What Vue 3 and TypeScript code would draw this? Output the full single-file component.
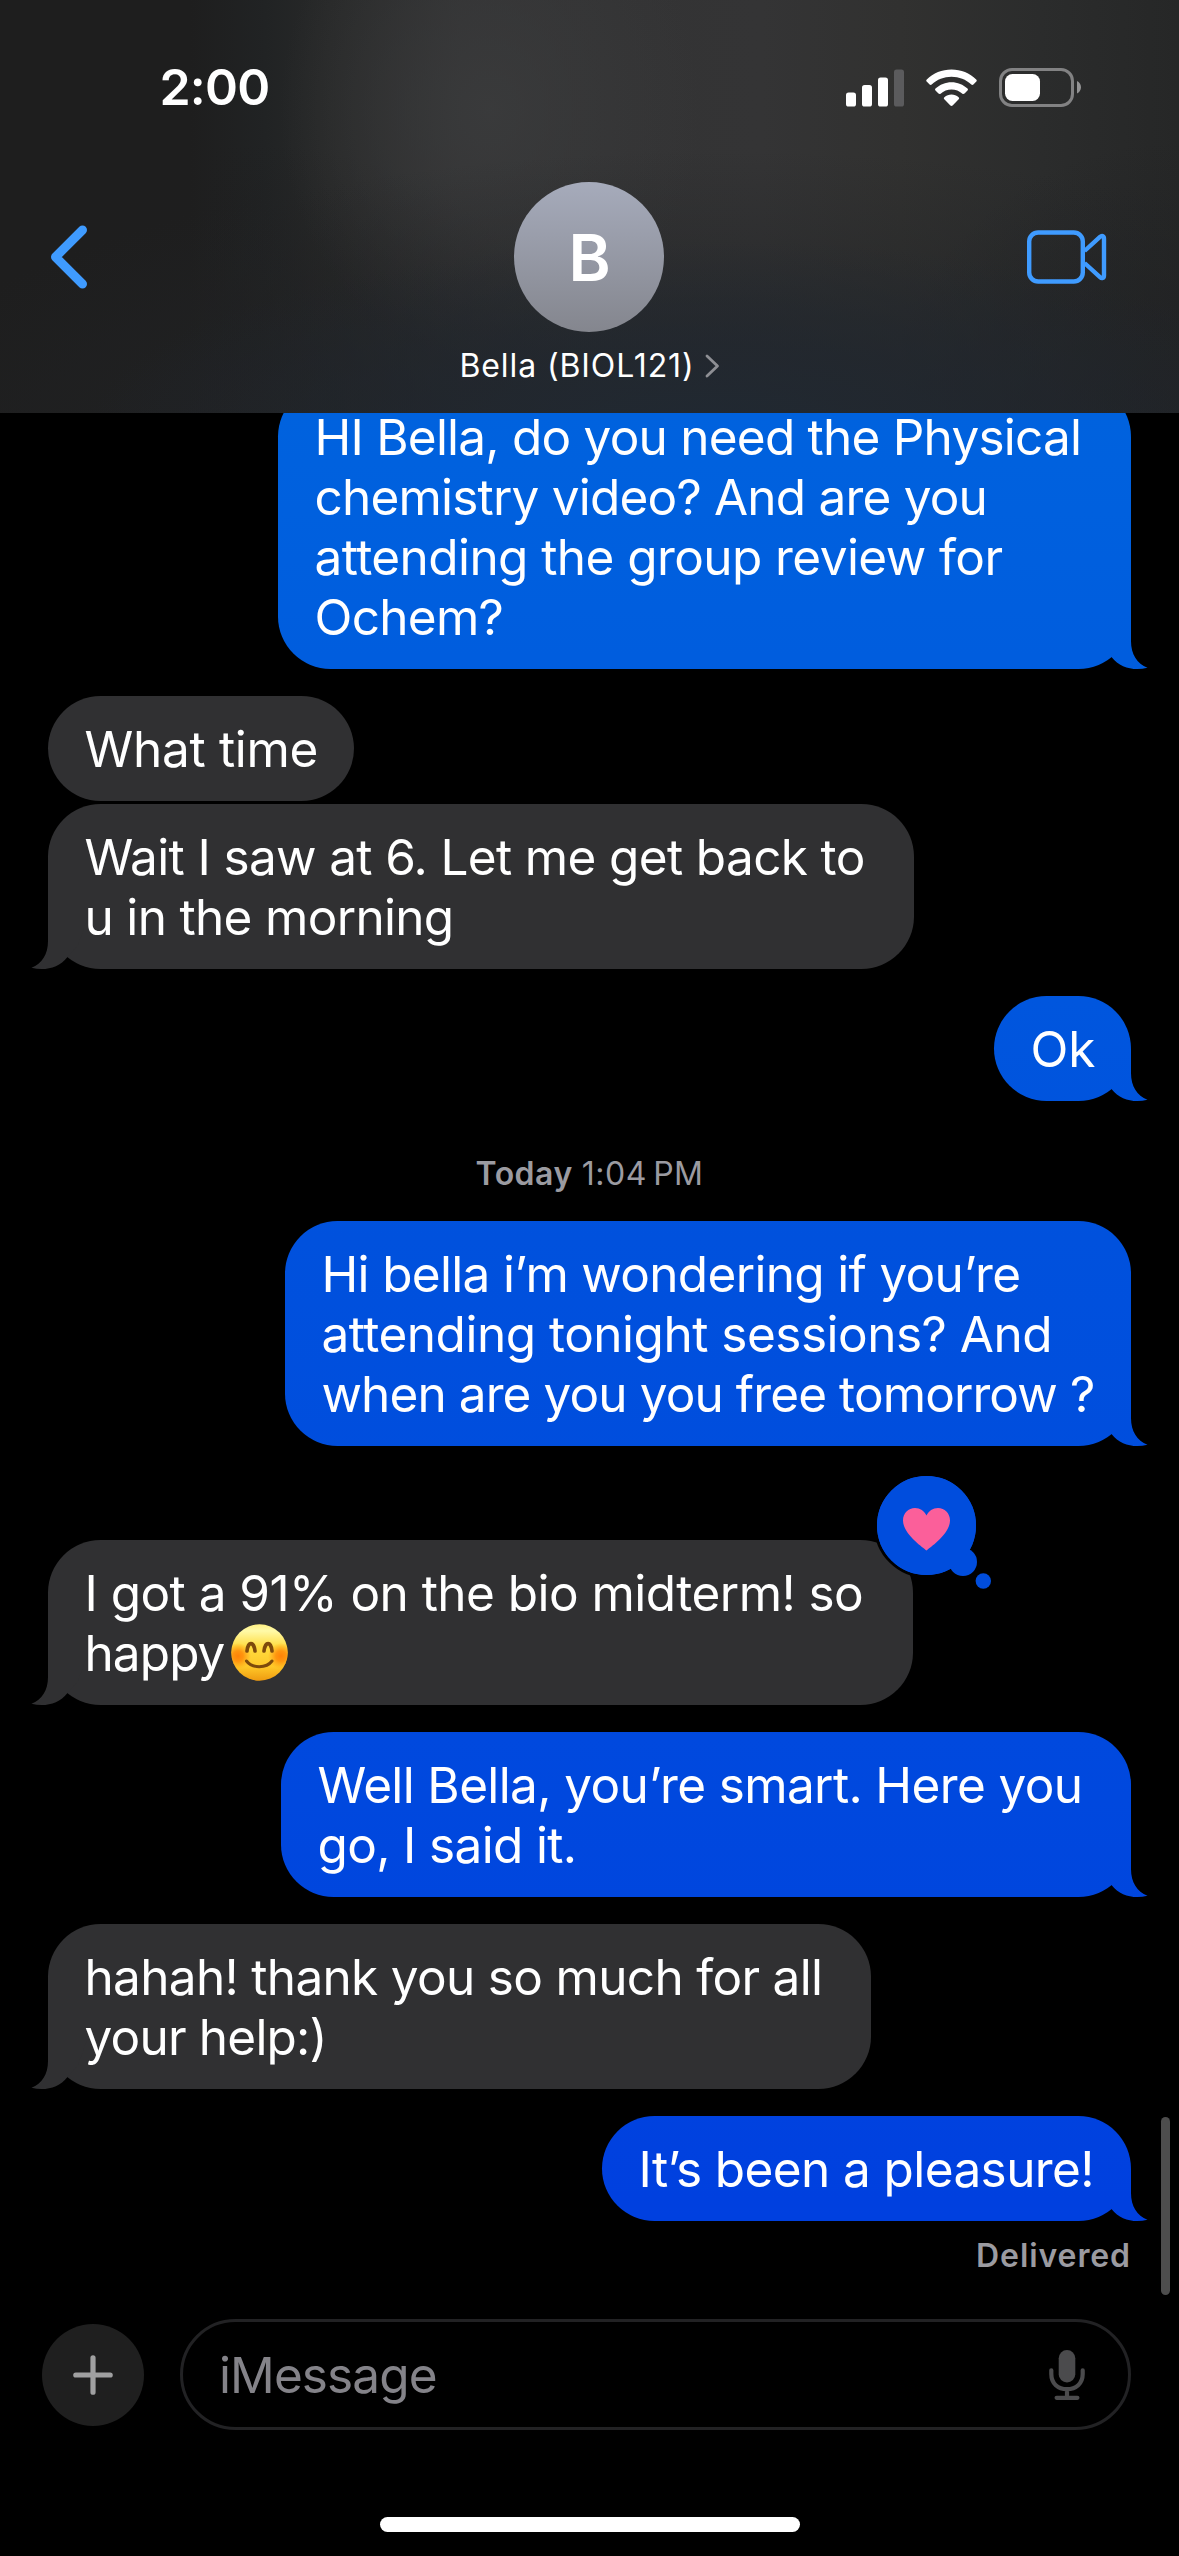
<script setup lang="ts">
interface Line {
  text: string
  // tracking in px
  ls: number
  emoji?: boolean
}
interface Message {
  from: 'me' | 'them'
  lines: Line[]
  width: number
  gap: number
  tail?: boolean
  reaction?: boolean
  stamp?: boolean
}

const messages: Message[] = [
  {
    from: 'me', width: 853, gap: 0, tail: true,
    lines: [
      { text: 'HI Bella, do you need the Physical', ls: -0.77 },
      { text: 'chemistry video? And are you', ls: -0.8 },
      { text: 'attending the group review for', ls: -0.57 },
      { text: 'Ochem?', ls: -0.7 },
    ],
  },
  { from: 'them', width: 306, gap: 27, lines: [{ text: 'What time', ls: -0.3 }] },
  {
    from: 'them', width: 866, gap: 3, tail: true,
    lines: [
      { text: 'Wait I saw at 6. Let me get back to', ls: -0.64 },
      { text: 'u in the morning', ls: -0.68 },
    ],
  },
  { from: 'me', width: 137, gap: 27, tail: true, lines: [{ text: 'Ok', ls: 0 }] },
  {
    from: 'me', width: 846, gap: 0, tail: true, stamp: true,
    lines: [
      { text: 'Hi bella i’m wondering if you’re', ls: -0.68 },
      { text: 'attending tonight sessions? And', ls: -0.5 },
      { text: 'when are you you free tomorrow ?', ls: -0.9 },
    ],
  },
  {
    from: 'them', width: 865, gap: 94, tail: true, reaction: true,
    lines: [
      { text: 'I got a 91% on the bio midterm! so', ls: -0.54 },
      { text: 'happy', ls: -0.9, emoji: true },
    ],
  },
  {
    from: 'me', width: 850, gap: 27, tail: true,
    lines: [
      { text: 'Well Bella, you’re smart. Here you', ls: -0.63 },
      { text: 'go, I said it.', ls: -0.65 },
    ],
  },
  {
    from: 'them', width: 823, gap: 27, tail: true,
    lines: [
      { text: 'hahah! thank you so much for all', ls: -0.68 },
      { text: 'your help:)', ls: -0.8 },
    ],
  },
  { from: 'me', width: 529, gap: 27, tail: true, lines: [{ text: 'It’s been a pleasure!', ls: -0.6 }] },
]
</script>

<template>
  <div class="screen">
    <header class="header">
      <div class="status">
        <span class="time">2:00</span>
        <div class="indicators">
          <svg class="signal" width="58" height="38" viewBox="0 0 58 38">
            <rect x="0" y="23.5" width="10" height="14" rx="2.6" fill="#fff" />
            <rect x="16" y="16" width="10" height="21.5" rx="2.6" fill="#fff" />
            <rect x="32" y="8.5" width="10" height="29" rx="2.6" fill="#fff" />
            <rect x="48" y="0.5" width="10" height="37" rx="2.6" fill="#5b5b5d" />
          </svg>
          <svg class="wifi" width="51" height="38" viewBox="0 0 51 38" fill="#fff">
            <path d="M25.5 0.5C35 0.5 43.800 4.200 50.200 10.400C50.900 11 50.900 12 50.300 12.600L47.400 15.500C46.800 16.100 45.900 16.100 45.300 15.500C40 10.600 33 7.800 25.500 7.800S11 10.600 5.700 15.500C5.100 16.100 4.200 16.100 3.600 15.500L0.700 12.600C0.100 12 0.100 11 0.800 10.400C7.200 4.200 16 0.500 25.500 0.500Z" />
            <path d="M25.500 13.200C31.500 13.200 37.200 15.500 41.500 19.500C42.100 20.100 42.100 21 41.500 21.600L38.500 24.600C37.900 25.200 37 25.200 36.400 24.700C33.400 22 29.600 20.500 25.500 20.500S17.600 22 14.600 24.700C14 25.200 13.100 25.200 12.500 24.600L9.500 21.600C8.900 21 8.900 20.100 9.500 19.500C13.800 15.500 19.500 13.200 25.500 13.200Z" />
            <path d="M25.500 25.600C28.100 25.600 30.600 26.500 32.600 28.200C33.300 28.800 33.300 29.700 32.700 30.300L26.600 36.600C26 37.200 25 37.200 24.400 36.600L18.300 30.300C17.700 29.700 17.700 28.800 18.400 28.200C20.400 26.500 22.900 25.600 25.500 25.600Z" />
          </svg>
          <svg class="battery" width="82" height="39" viewBox="0 0 82 39">
            <rect x="1.500" y="1.500" width="72" height="36" rx="11.500" fill="none" stroke="#828283" stroke-width="3" />
            <rect x="6" y="6" width="35" height="27" rx="7.500" fill="#fff" />
            <path d="M78 13V25.500C80.300 24.500 82 22 82 19.250S80.300 14 78 13Z" fill="#949495" />
          </svg>
        </div>
      </div>
      <div class="nav">
        <svg class="back" width="40" height="66" viewBox="0 0 40 66">
          <path d="M34.500 6L7.500 33L34.500 60" fill="none" stroke="#3f9bff" stroke-width="9" stroke-linecap="round" stroke-linejoin="round" />
        </svg>
        <div class="avatar"><span>B</span></div>
        <svg class="video" width="80" height="54" viewBox="0 0 80 54" fill="none" stroke="#3f9bff" stroke-width="4.400">
          <rect x="2.200" y="2.500" width="53.600" height="49" rx="9" />
          <path d="M57.500 21L73 6.800C74.800 5.200 77 5.600 77 8.500V45.500C77 48.400 74.800 48.800 73 47.200L57.500 33" stroke-linejoin="round" />
        </svg>
      </div>
      <div class="contact">
        <span class="name">Bella (BIOL121)</span>
        <svg width="15" height="24" viewBox="0 0 15 24">
          <path d="M2 2L12.500 12L2 22" fill="none" stroke="#8e8f94" stroke-width="2.800" stroke-linecap="round" stroke-linejoin="round" />
        </svg>
      </div>
    </header>

    <main class="thread">
      <template v-for="(m, i) in messages" :key="i">
        <div v-if="m.stamp" class="stamp"><b>Today</b><span>1:04&#8239;PM</span></div>
        <div class="row" :class="m.from" :style="{ marginTop: m.gap + 'px' }">
          <div class="bubble" :style="{ width: m.width + 'px' }">
            <i v-if="m.tail" class="tail"></i>
            <p v-for="(l, j) in m.lines" :key="j" class="line" :style="{ letterSpacing: l.ls + 'px' }">
              <span>{{ l.text }}</span>
              <svg v-if="l.emoji" class="emoji" width="57" height="57" viewBox="0 0 57 57">
                <defs>
                  <linearGradient id="face" x1="0" y1="0" x2="0" y2="1">
                    <stop offset="0" stop-color="#ffef80" />
                    <stop offset="0.120" stop-color="#fffaa8" />
                    <stop offset="0.400" stop-color="#ffdc40" />
                    <stop offset="0.750" stop-color="#ffc828" />
                    <stop offset="1" stop-color="#ee9a10" />
                  </linearGradient>
                  <radialGradient id="blush">
                    <stop offset="0" stop-color="#ff8208" />
                    <stop offset="0.400" stop-color="#ff8a08" stop-opacity="0.850" />
                    <stop offset="1" stop-color="#ff9a10" stop-opacity="0" />
                  </radialGradient>
                  <clipPath id="disc"><circle cx="28.500" cy="28.500" r="28.200" /></clipPath>
                </defs>
                <g clip-path="url(#disc)">
                  <rect width="57" height="57" fill="url(#face)" />
                  <circle cx="7" cy="32" r="13" fill="url(#blush)" />
                  <circle cx="50" cy="32" r="13" fill="url(#blush)" />
                </g>
                <path d="M16 27C17 17.200 22.800 17.200 24 27M33 27C34.200 17.200 40 17.200 41 27" fill="none" stroke="#7d4a0c" stroke-width="3.600" stroke-linecap="round" />
                <path d="M15.500 37C21 44.500 35.500 44.500 41 37" fill="none" stroke="#7d4a0c" stroke-width="3" stroke-linecap="round" />
              </svg>
            </p>
            <svg v-if="m.reaction" class="reaction" width="122" height="120" viewBox="0 0 122 120">
              <g fill="#004ddd">
                <circle cx="53.500" cy="53.500" r="51" stroke="#000" stroke-width="3" />
                <circle cx="90" cy="90" r="14" />
                <circle cx="110.300" cy="109" r="7.700" />
                <circle cx="53.500" cy="53.500" r="49.500" />
              </g>
              <path d="M53.500 78.500C50 75.500 30 62 30 48.500C30 41 35.500 36 42 36C47 36 51.500 39 53.500 43.500C55.500 39 60 36 65 36C71.500 36 77 41 77 48.500C77 62 57 75.500 53.500 78.500Z" fill="#fb5f9a" />
            </svg>
          </div>
        </div>
      </template>
      <div class="receipt">Delivered</div>
      <div class="scrollbar"></div>
    </main>

    <footer class="composer">
      <div class="bar">
        <div class="plus">
          <svg width="40" height="40" viewBox="0 0 40 40">
            <path d="M20 2.800V37.200M2.800 20H37.200" stroke="#a0a0a1" stroke-width="5.200" stroke-linecap="round" />
          </svg>
        </div>
        <div class="field">
          <span class="placeholder">iMessage</span>
          <svg width="36" height="50" viewBox="0 0 36 50">
            <rect x="9.700" y="0" width="16.600" height="32.500" rx="8.300" fill="#4b4b4d" />
            <path d="M2.300 20.300V24C2.300 33.500 9 39.200 18 39.200S33.700 33.500 33.700 24V20.300M18 39.500V47.500M7.600 47.800H28.400" fill="none" stroke="#4b4b4d" stroke-width="4.200" stroke-linecap="round" />
          </svg>
        </div>
      </div>
      <div class="home"></div>
    </footer>
  </div>
</template>

<style>
html,
body {
  background: #000;
}
</style>

<style scoped>
.screen {
  width: 1179px;
  height: 2556px;
  overflow: hidden;
  display: flex;
  flex-direction: column;
  background: #000;
  color: #fff;
  font-family: Inter, "Liberation Sans", sans-serif;
}
.header {
  position: relative;
  z-index: 2;
  flex: none;
  height: 413px;
  box-sizing: border-box;
  padding-top: 68px;
  background:
    radial-gradient(ellipse 620px 190px at 710px 430px, rgba(32, 41, 51, 0.9), rgba(32, 39, 48, 0.65) 45%, rgba(33, 36, 40, 0) 100%),
    radial-gradient(ellipse 900px 330px at 720px 480px, rgba(33, 35, 38, 0.9), rgba(34, 36, 38, 0.6) 50%, rgba(36, 37, 38, 0) 100%),
    radial-gradient(ellipse 210px 250px at 490px 110px, rgba(59, 60, 61, 0.8), rgba(58, 58, 59, 0) 100%),
    radial-gradient(ellipse 360px 300px at 240px 440px, rgba(30, 30, 31, 0.95), rgba(30, 31, 32, 0) 100%),
    radial-gradient(ellipse 300px 300px at 1179px 440px, rgba(30, 31, 33, 0.9), rgba(30, 32, 34, 0) 100%),
    linear-gradient(90deg, #1e1e1e 0, #1e1e1e 190px, #212324 265px, #282929 330px, #323233 460px, #343435 760px, #313130 900px, #2b2c2c 1040px, #262727 1179px);
}
.status {
  height: 39px;
  padding: 0 98px 0 159.500px;
  display: flex;
  justify-content: space-between;
  align-items: flex-start;
}
.time {
  font-size: 50px;
  line-height: 39px;
  font-weight: 600;
  letter-spacing: -0.8px;
}
.indicators {
  display: flex;
  align-items: flex-start;
}
.signal {
  margin: 0.5px 22px 0 0;
}
.wifi {
  margin: 0.5px 22px 0 0;
}
.nav {
  margin-top: 75px;
  height: 150px;
  padding: 0 72px 0 48px;
  display: flex;
  justify-content: space-between;
  align-items: center;
}
.back {
  margin-right: 63px;
}
.avatar {
  width: 150px;
  height: 150px;
  border-radius: 50%;
  display: flex;
  align-items: center;
  justify-content: center;
  background: linear-gradient(#a6abbb, #84868e);
  font-size: 64px;
  line-height: 64px;
  font-weight: 600;
}
.avatar span {
  margin: 2px 0 0 1px;
}
.contact {
  margin-top: 14px;
  height: 40px;
  display: flex;
  align-items: center;
  justify-content: center;
  gap: 10px;
}
.name {
  font-size: 32px;
  line-height: 40px;
  letter-spacing: 0.900px;
}
.thread {
  position: relative;
  flex: none;
  height: 1904px;
  margin-top: -29px;
  padding: 0 48px;
}
.row {
  display: flex;
}
.row.me {
  justify-content: flex-end;
}
.bubble {
  position: relative;
  box-sizing: border-box;
  padding: 23px 0 22px 36.500px;
  border-radius: 52.500px;
}
.me .bubble,
.me .tail {
  background: linear-gradient(#006ae0 0, #0062de 413px, #0056de 1000px, #0051dd 1240px, #0048de 1800px, #0040df 2200px) fixed;
}
.them .bubble,
.them .tail {
  background: #303032;
}
.line {
  position: relative;
  margin: 0;
  height: 60px;
  line-height: 60px;
  font-size: 49.500px;
  white-space: nowrap;
  display: flex;
  align-items: center;
}
.emoji {
  margin: -2px 0 0 6px;
}
.tail {
  position: absolute;
  right: -17px;
  bottom: 0;
  width: 57px;
  height: 52px;
  clip-path: path("M0 0H40V24C40 37 46 47 56.500 50.800C43 54 29 51 20.700 40.200L10 28Z");
}
.them .tail {
  right: auto;
  left: -17px;
  transform: scaleX(-1);
}
.reaction {
  position: absolute;
  left: 825px;
  top: -68px;
}
.stamp {
  height: 120px;
  display: flex;
  justify-content: center;
  box-sizing: border-box;
  padding-top: 53px;
  gap: 9px;
  color: #9b9ba1;
  font-size: 32px;
  line-height: 40px;
  letter-spacing: 0.500px;
}
.stamp b {
  font-weight: 600;
}
.receipt {
  margin-top: 15px;
  text-align: right;
  color: #9b9ba1;
  font-size: 32px;
  line-height: 40px;
  font-weight: 600;
  letter-spacing: 0.900px;
}
.scrollbar {
  position: absolute;
  right: 9px;
  top: 1733px;
  width: 9px;
  height: 178px;
  border-radius: 5px;
  background: #4d4d4d;
}
.composer {
  flex: 1;
  padding: 31px 48px 0 42px;
}
.bar {
  display: flex;
  align-items: center;
  gap: 36px;
}
.plus {
  width: 102px;
  height: 102px;
  border-radius: 50%;
  background: #1f1f1f;
  display: flex;
  align-items: center;
  justify-content: center;
}
.field {
  flex: 1;
  height: 111px;
  box-sizing: border-box;
  border: 3px solid #222224;
  border-radius: 56px;
  padding: 0 43px 0 36px;
  display: flex;
  align-items: center;
  justify-content: space-between;
}
.placeholder {
  color: #848389;
  font-size: 49.500px;
  line-height: 60px;
  letter-spacing: -0.900px;
}
.home {
  margin: 87px auto 0 338px;
  width: 420px;
  height: 15px;
  border-radius: 8px;
  background: #fff;
}
</style>
